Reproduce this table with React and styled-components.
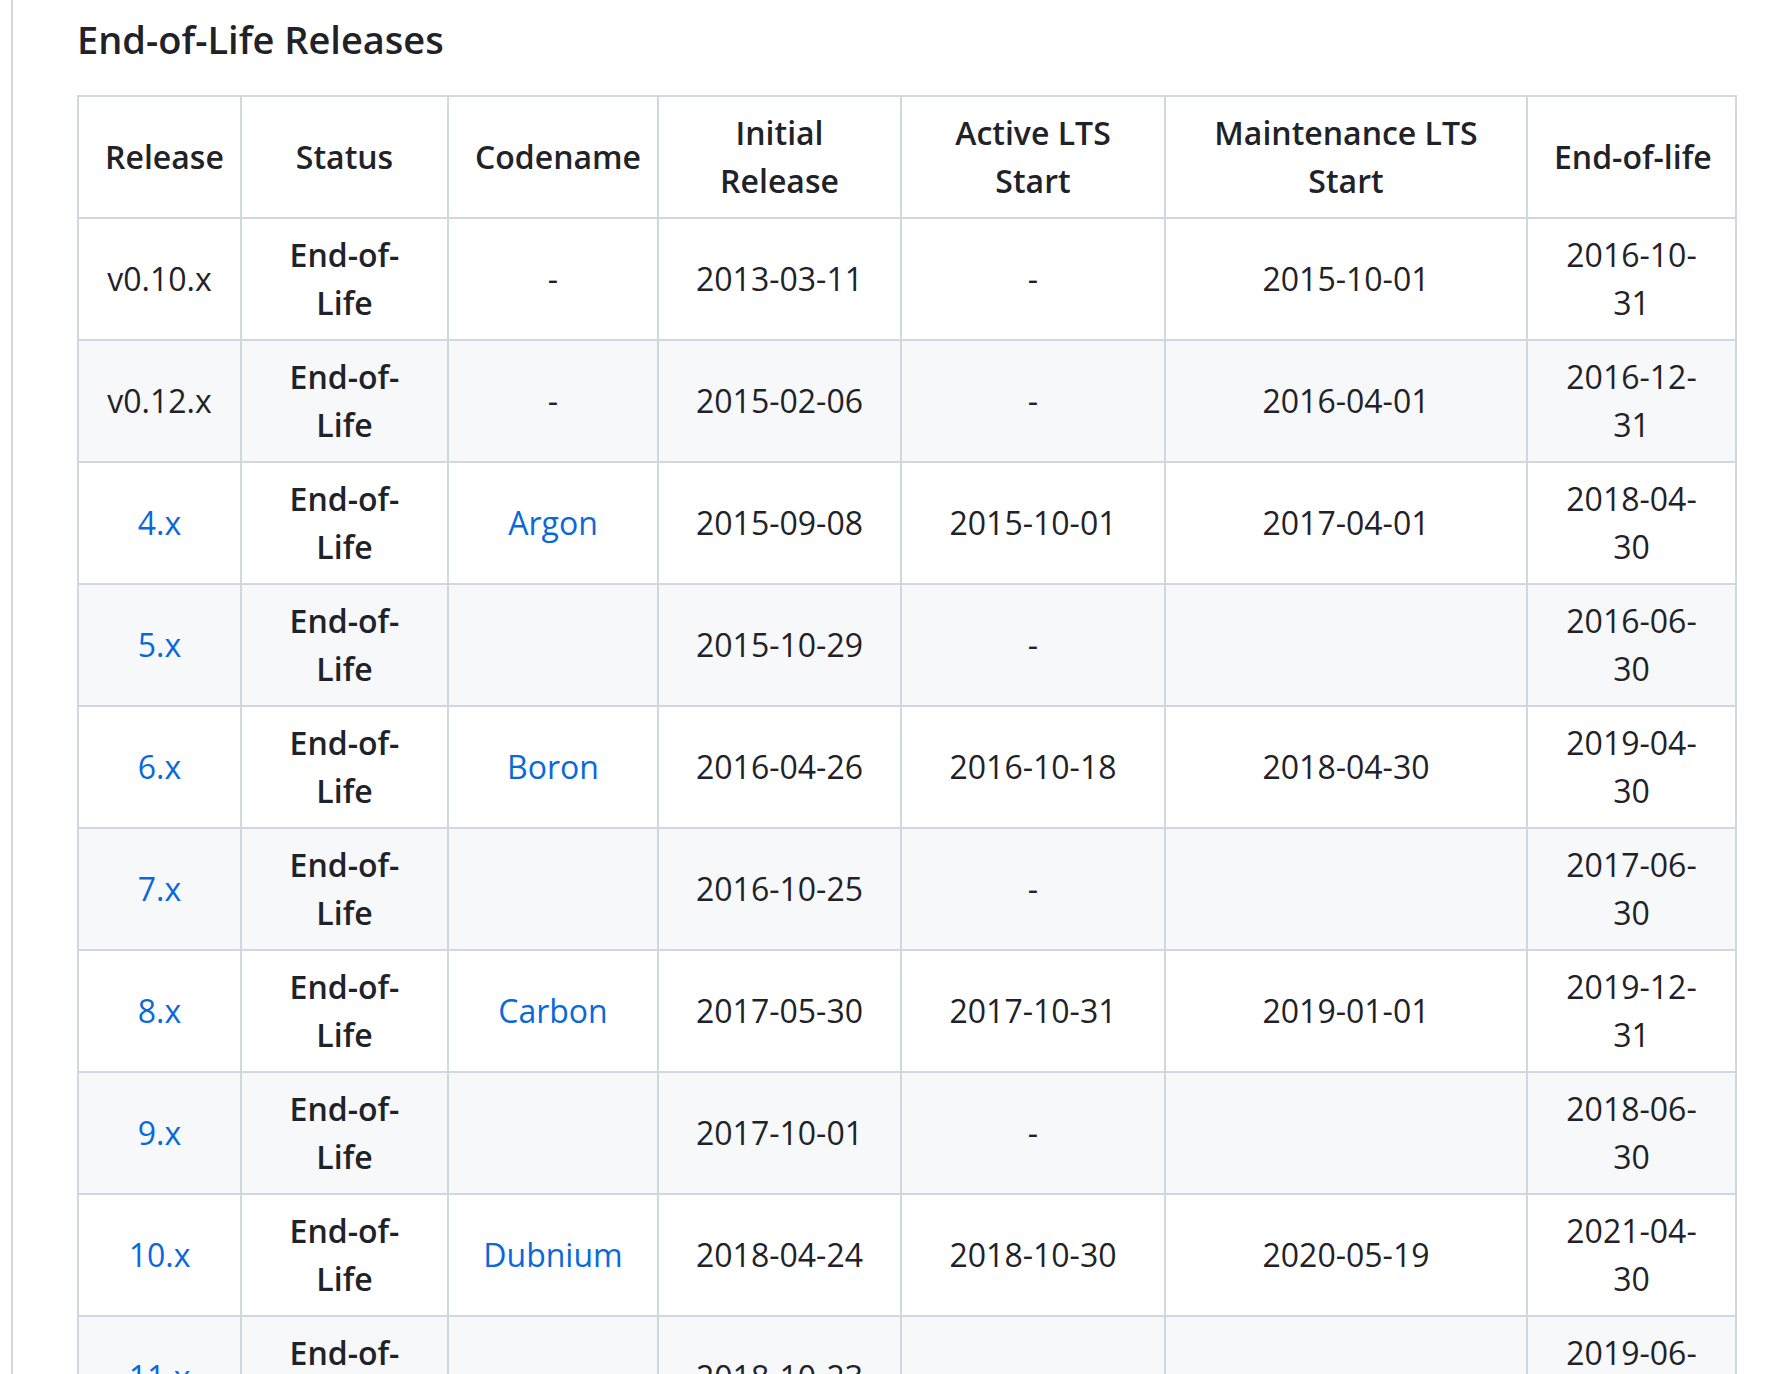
import React from "react";
import styled, { createGlobalStyle } from "styled-components";

const Colors = {
  text: "#1f2328",
  link: "#0969da",
  border: "#d0d7de",
  stripe: "#f6f8fa",
};

const GlobalStyle = createGlobalStyle`
  html, body {
    margin: 0;
    padding: 0;
    background: #ffffff;
  }
  body {
    font-family: "Open Sans", "Noto Sans", "Liberation Sans", sans-serif;
    color: ${Colors.text};
  }
`;

const Page = styled.div`
  margin-left: 11px;
  border-left: 2px solid ${Colors.border};
  padding: 14px 28px 0 64px;
  min-height: 100vh;
  box-sizing: border-box;
`;

const Heading = styled.h3`
  margin: 0 0 31px;
  font-size: 38px;
  line-height: 50px;
  font-weight: 600;
  color: ${Colors.text};
`;

const Table = styled.table`
  border-collapse: collapse;
  table-layout: fixed;
  width: 1658px;
  font-size: 32px;
  line-height: 48px;
`;

const Row = styled.tr`
  background-color: ${({ striped }) => (striped ? Colors.stripe : "#ffffff")};
`;

const HeadCell = styled.th`
  border: 2px solid ${Colors.border};
  padding: 12px 26px;
  font-weight: 600;
  text-align: center;
  vertical-align: middle;
  white-space: ${({ nowrap }) => (nowrap ? "nowrap" : "normal")};
`;

const Cell = styled.td`
  border: 2px solid ${Colors.border};
  padding: 12px 26px;
  text-align: center;
  vertical-align: middle;
  font-weight: ${({ strong }) => (strong ? 600 : 400)};
`;

const Link = styled.a`
  color: ${Colors.link};
  text-decoration: none;
`;

const columns = [
  { label: "Release", width: 163 },
  { label: "Status", width: 207 },
  { label: "Codename", width: 210 },
  { label: "Initial Release", width: 243 },
  { label: "Active LTS Start", width: 264 },
  { label: "Maintenance LTS Start", width: 362 },
  { label: "End-of-life", width: 209, nowrap: true },
];

const releases = [
  { release: "v0.10.x", codename: "-", initial: "2013-03-11", active: "-", maint: "2015-10-01", eol: "2016-10-31" },
  { release: "v0.12.x", codename: "-", initial: "2015-02-06", active: "-", maint: "2016-04-01", eol: "2016-12-31" },
  { release: "4.x", link: true, codename: "Argon", initial: "2015-09-08", active: "2015-10-01", maint: "2017-04-01", eol: "2018-04-30" },
  { release: "5.x", link: true, codename: "", initial: "2015-10-29", active: "-", maint: "", eol: "2016-06-30" },
  { release: "6.x", link: true, codename: "Boron", initial: "2016-04-26", active: "2016-10-18", maint: "2018-04-30", eol: "2019-04-30" },
  { release: "7.x", link: true, codename: "", initial: "2016-10-25", active: "-", maint: "", eol: "2017-06-30" },
  { release: "8.x", link: true, codename: "Carbon", initial: "2017-05-30", active: "2017-10-31", maint: "2019-01-01", eol: "2019-12-31" },
  { release: "9.x", link: true, codename: "", initial: "2017-10-01", active: "-", maint: "", eol: "2018-06-30" },
  { release: "10.x", link: true, codename: "Dubnium", initial: "2018-04-24", active: "2018-10-30", maint: "2020-05-19", eol: "2021-04-30" },
  { release: "11.x", link: true, codename: "", initial: "2018-10-23", active: "-", maint: "", eol: "2019-06-01" },
];

function ReleaseRow({ item, striped }) {
  const isCodename = item.codename && item.codename !== "-";
  return (
    <Row striped={striped}>
      <Cell>{item.link ? <Link href="#">{item.release}</Link> : item.release}</Cell>
      <Cell strong>End-of-Life</Cell>
      <Cell>{isCodename ? <Link href="#">{item.codename}</Link> : item.codename}</Cell>
      <Cell>{item.initial}</Cell>
      <Cell>{item.active}</Cell>
      <Cell>{item.maint}</Cell>
      <Cell>{item.eol}</Cell>
    </Row>
  );
}

function App() {
  return (
    <>
      <GlobalStyle />
      <Page>
        <Heading>End-of-Life Releases</Heading>
        <Table>
          <colgroup>
            {columns.map((c) => (
              <col key={c.label} style={{ width: c.width }} />
            ))}
          </colgroup>
          <thead>
            <Row>
              {columns.map((c) => (
                <HeadCell key={c.label} nowrap={c.nowrap}>
                  {c.label}
                </HeadCell>
              ))}
            </Row>
          </thead>
          <tbody>
            {releases.map((item, i) => (
              <ReleaseRow key={item.release} item={item} striped={i % 2 === 1} />
            ))}
          </tbody>
        </Table>
      </Page>
    </>
  );
}

export default App;
